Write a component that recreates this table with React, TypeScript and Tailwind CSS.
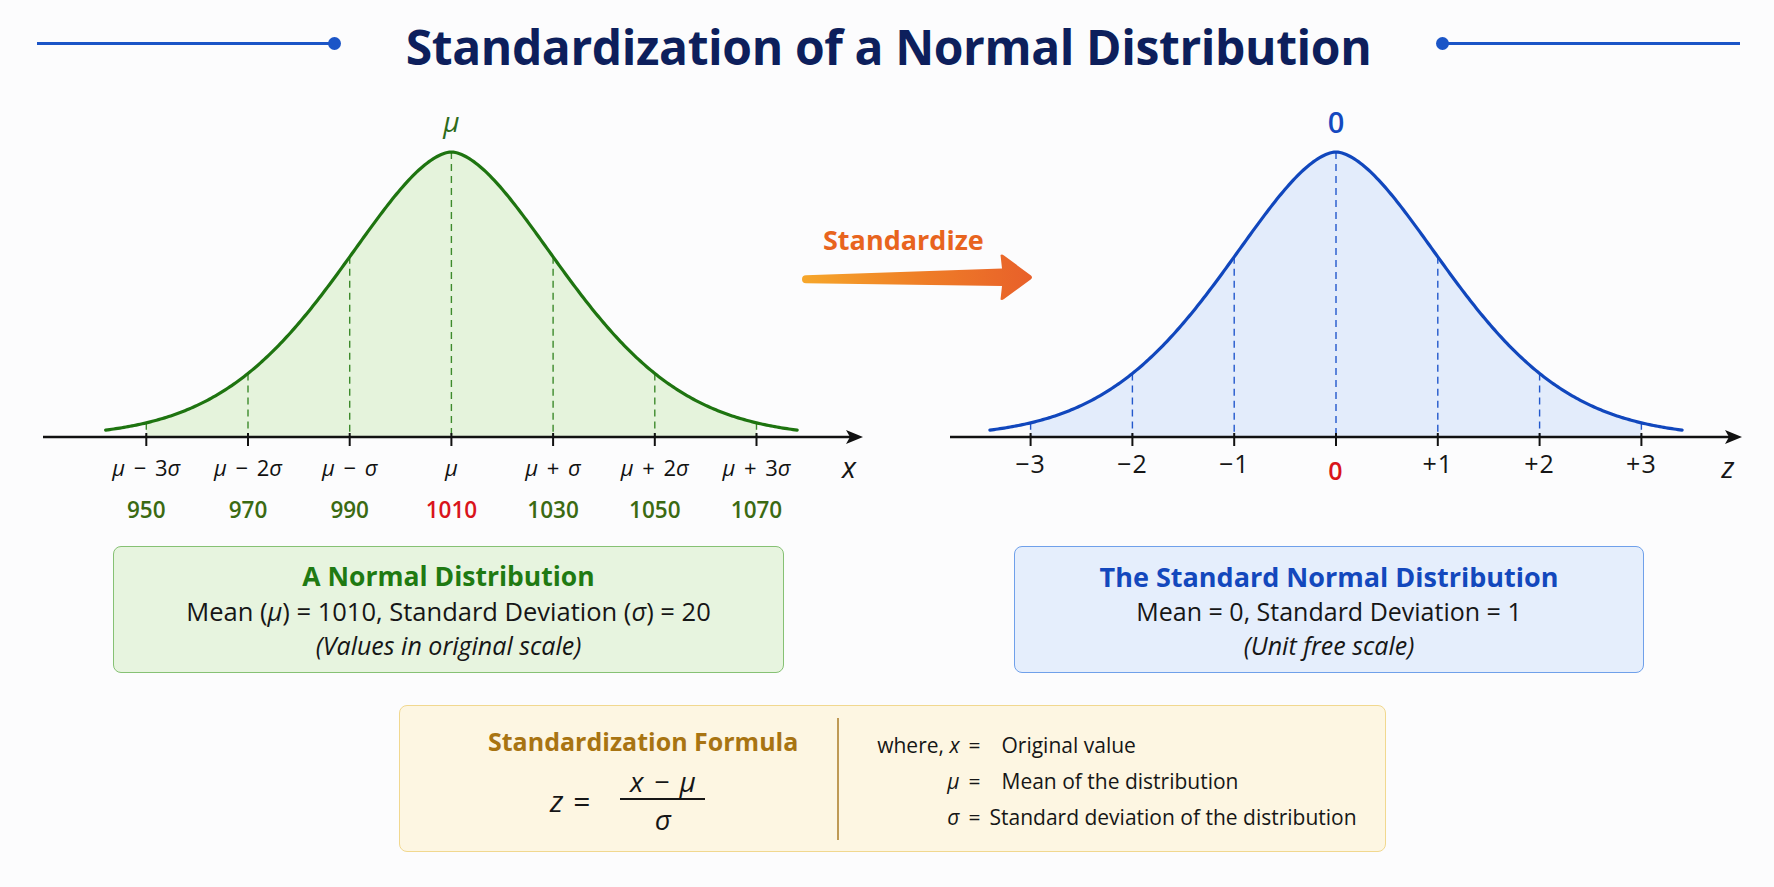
import React from "react";

const P = 1.71;
const C = 2.18;
const hgt = (z: number) => Math.exp(-Math.pow(Math.abs(z), P) / C);

type ChartProps = {
  ox: number;
  oy: number;
  w: number;
  h: number;
  cx: number;
  sp: number;
  axisY: number;
  peakY: number;
  axisX0: number;
  axisX1: number;
  stroke: string;
  fill: string;
  dash: string;
  children?: React.ReactNode;
};

function Chart({ ox, oy, w, h, cx, sp, axisY, peakY, axisX0, axisX1, stroke, fill, dash, children }: ChartProps) {
  const H = axisY - peakY;
  const yAt = (z: number) => axisY - H * hgt(z);
  const curve: string[] = [];
  for (let i = 0; i <= 340; i++) {
    const z = -3.4 + (i * 6.8) / 340;
    curve.push(`${i === 0 ? "M" : "L"}${(cx + z * sp).toFixed(2)},${yAt(z).toFixed(2)}`);
  }
  const area: string[] = [];
  for (let i = 0; i <= 300; i++) {
    const z = -3 + (i * 6) / 300;
    area.push(`${i === 0 ? "M" : "L"}${(cx + z * sp).toFixed(2)},${yAt(z).toFixed(2)}`);
  }
  area.push(`L${cx + 3 * sp},${axisY} L${cx - 3 * sp},${axisY} Z`);
  const ks = [-3, -2, -1, 0, 1, 2, 3];
  return (
    <svg width={w} height={h} className="shrink-0 overflow-visible">
      <g transform={`translate(${-ox} ${-oy})`}>
        <path d={area.join(" ")} fill={fill} />
        {ks.map((k) => (
          <line
            key={k}
            x1={cx + k * sp}
            x2={cx + k * sp}
            y1={yAt(k)}
            y2={axisY}
            stroke={dash}
            strokeWidth={1.4}
            strokeDasharray="7 5"
          />
        ))}
        <path d={curve.join(" ")} fill="none" stroke={stroke} strokeWidth={3.2} strokeLinecap="round" />
        <line x1={axisX0} x2={axisX1 - 10} y1={axisY} y2={axisY} stroke="#111" strokeWidth={2.6} />
        <polygon
          points={`${axisX1},${axisY} ${axisX1 - 17},${axisY - 7} ${axisX1 - 13},${axisY} ${axisX1 - 17},${axisY + 7}`}
          fill="#111"
        />
        {ks.map((k) => (
          <line
            key={"t" + k}
            x1={cx + k * sp}
            x2={cx + k * sp}
            y1={axisY - 4}
            y2={axisY + 9}
            stroke="#111"
            strokeWidth={2}
          />
        ))}
        {children}
      </g>
    </svg>
  );
}

const leftLabels: [string, string][] = [
  ["3", "−"],
  ["2", "−"],
  ["", "−"],
  ["", ""],
  ["", "+"],
  ["2", "+"],
  ["3", "+"],
];
const leftNums = ["950", "970", "990", "1010", "1030", "1050", "1070"];
const rightLabels = ["−3", "−2", "−1", "0", "+1", "+2", "+3"];

export default function App() {
  const lcx = 451.4;
  const lsp = 101.7;
  const rcx = 1336;
  const rsp = 101.8;
  return (
    <div className="w-[1774px] h-[887px] bg-[#fcfcfd] flex flex-col font-['Open_Sans',sans-serif] text-[#161616] overflow-hidden">
      {/* Header */}
      <div className="h-[90px] flex items-center pl-[37px] pr-[34px]">
        <div className="w-[304px] flex items-center mb-[4px]">
          <div className="flex-1 h-[3px] bg-[#1b55c7]" />
          <div className="w-[13px] h-[13px] rounded-full bg-[#1b55c7] -ml-[1px]" />
        </div>
        <div className="flex-1 text-center text-[48px] leading-[48px] font-bold text-[#0d1f5c] mt-[3px] tracking-[-0.4px]">
          Standardization of a Normal Distribution
        </div>
        <div className="w-[304px] flex items-center mb-[4px]">
          <div className="w-[13px] h-[13px] rounded-full bg-[#1b55c7] -mr-[1px]" />
          <div className="flex-1 h-[3px] bg-[#1b55c7]" />
        </div>
      </div>

      {/* Charts */}
      <div className="h-[450px] flex pl-[40px]">
        <Chart
          ox={40}
          oy={90}
          w={762}
          h={450}
          cx={lcx}
          sp={lsp}
          axisY={437}
          peakY={152}
          axisX0={43}
          axisX1={863}
          stroke="#1e7410"
          fill="#e5f3dc"
          dash="#3d8a2c"
        >
          <text x={lcx} y={121} textAnchor="middle" dominantBaseline="central" fontSize={28} fontStyle="italic" fill="#2e6b1a">
            μ
          </text>
          {leftLabels.map(([n, op], i) => (
            <text
              key={i}
              x={lcx + (i - 3) * lsp}
              y={467}
              textAnchor="middle"
              dominantBaseline="central"
              fontSize={22}
              wordSpacing={3}
              fill="#111"
            >
              <tspan fontStyle="italic">μ</tspan>
              {op ? ` ${op} ${n}` : ""}
              {op ? <tspan fontStyle="italic">σ</tspan> : null}
            </text>
          ))}
          {leftNums.map((n, i) => (
            <text
              key={n}
              x={lcx + (i - 3) * lsp}
              y={509}
              textAnchor="middle"
              dominantBaseline="central"
              fontSize={22.5}
              fontWeight={600}
              fill={i === 3 ? "#d9141b" : "#3b6a12"}
            >
              {n}
            </text>
          ))}
          <text x={849} y={466} textAnchor="middle" dominantBaseline="central" fontSize={29} fontStyle="italic" fill="#161616">
            x
          </text>
        </Chart>

        {/* Middle arrow */}
        <div className="w-[230px] shrink-0 flex flex-col pt-[136px]">
          <div className="pl-[21px] text-[27px] leading-[27px] font-bold text-[#e8641e]">Standardize</div>
          <svg width={230} height={52} className="-mt-[2px] overflow-visible">
            <defs>
              <linearGradient id="ag" x1="0" y1="0" x2="1" y2="0">
                <stop offset="0" stopColor="#f6a72b" />
                <stop offset="0.5" stopColor="#ef7f27" />
                <stop offset="1" stopColor="#e8602a" />
              </linearGradient>
            </defs>
            <path
              d="M4,24.3 L200,17.5 L198.5,4 Q200,3 202,4.5 L229,24.5 Q231,26.3 229,28.2 L202,48 Q200,49.5 198.5,48.5 L200,35 L4,32.3 A4,4 0 0 1 4,24.3 Z"
              fill="url(#ag)"
            />
          </svg>
        </div>

        <Chart
          ox={1032}
          oy={90}
          w={742}
          h={450}
          cx={rcx}
          sp={rsp}
          axisY={437}
          peakY={152}
          axisX0={950}
          axisX1={1742}
          stroke="#1147bd"
          fill="#e3ecfb"
          dash="#2358cc"
        >
          <text x={rcx} y={121} textAnchor="middle" dominantBaseline="central" fontSize={29} fontWeight={600} fill="#1449c0">
            0
          </text>
          {rightLabels.map((l, i) => (
            <text
              key={l}
              x={rcx + (i - 3) * rsp}
              y={i === 3 ? 470 : 463}
              textAnchor="middle"
              dominantBaseline="central"
              fontSize={25}
              letterSpacing={1}
              fontWeight={i === 3 ? 600 : 500}
              fill={i === 3 ? "#d9141b" : "#161616"}
            >
              {l}
            </text>
          ))}
          <text x={1728} y={466} textAnchor="middle" dominantBaseline="central" fontSize={29} fontStyle="italic" fill="#161616">
            z
          </text>
        </Chart>
      </div>

      {/* Description boxes */}
      <div className="mt-[6px] h-[127px] flex pl-[113px] gap-[230px]">
        <div className="w-[671px] h-[127px] rounded-[8px] border-[1.5px] border-[#86c174] bg-[#e7f4df] flex flex-col items-center pt-[12px]">
          <div className="text-[26.5px] leading-[35px] font-bold text-[#1f7a12]">A Normal Distribution</div>
          <div className="text-[25.5px] leading-[34px]">
            Mean (<span className="italic">μ</span>) = 1010, Standard Deviation (<span className="italic">σ</span>) = 20
          </div>
          <div className="text-[25px] leading-[34px] italic">(Values in original scale)</div>
        </div>
        <div className="w-[630px] h-[127px] rounded-[8px] border-[1.5px] border-[#6fa0ea] bg-[#e5eefc] flex flex-col items-center pt-[12px]">
          <div className="text-[27px] leading-[35px] font-bold text-[#1348bd]">The Standard Normal Distribution</div>
          <div className="text-[25px] leading-[34px]">Mean = 0, Standard Deviation = 1</div>
          <div className="text-[25px] leading-[34px] italic">(Unit free scale)</div>
        </div>
      </div>

      {/* Formula box */}
      <div className="mt-[32px] ml-[399px] w-[987px] h-[147px] rounded-[8px] border-[1.5px] border-[#f1d88f] bg-[#fdf6e2] flex">
        <div className="w-[437px] shrink-0 flex flex-col items-start pl-[88px] pt-[18px]">
          <div className="text-[25px] leading-[34px] font-bold text-[#a87412]">Standardization Formula</div>
          <div className="flex items-center mt-[6px] ml-[62px] text-[#161616]">
            <span className="italic text-[30px] leading-[30px]">z</span>
            <span className="text-[30px] leading-[30px] ml-[10px]">=</span>
            <div className="flex flex-col items-center ml-[30px]">
              <div className="italic text-[28px] leading-[34px] [word-spacing:3px]">x − μ</div>
              <div className="w-[85px] h-[2px] bg-[#161616]" />
              <div className="italic text-[28px] leading-[38px]">σ</div>
            </div>
          </div>
        </div>
        <div className="w-[1.5px] h-[122px] mt-[12px] bg-[#bf9a55]" />
        <div className="pl-[22px] pt-[21px] text-[21px] leading-[36px]">
          <div className="grid grid-cols-[99px_30px_auto]">
            <div className="text-right">
              where, <span className="italic">x</span>
            </div>
            <div className="text-center">=</div>
            <div className="pl-[12px]">Original value</div>
            <div className="text-right italic">μ</div>
            <div className="text-center">=</div>
            <div className="pl-[12px]">Mean of the distribution</div>
            <div className="text-right italic">σ</div>
            <div className="text-center">=</div>
            <div>Standard deviation of the distribution</div>
          </div>
        </div>
      </div>
    </div>
  );
}
